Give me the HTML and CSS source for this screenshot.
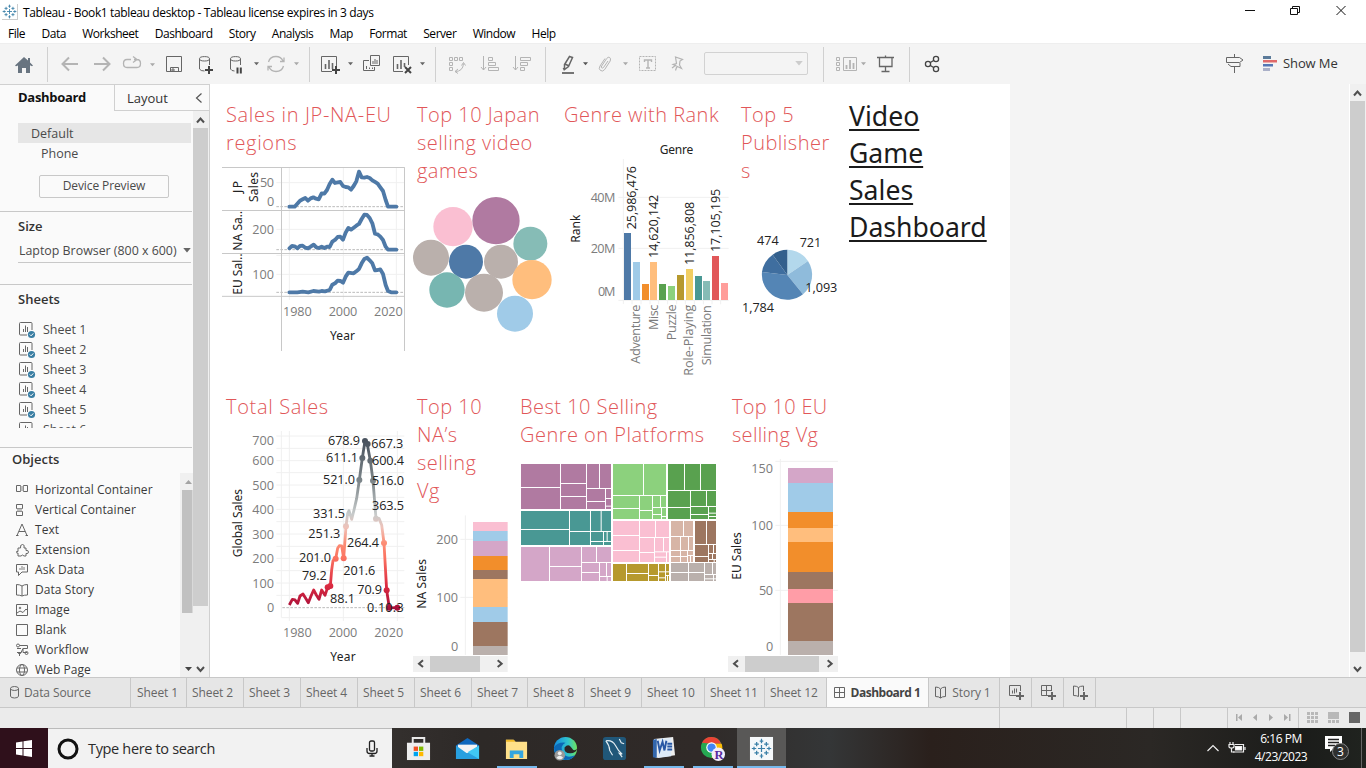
FILE: index.html
```html
<!DOCTYPE html>
<html lang="en">
<head>
<meta charset="utf-8">
<title>Tableau - Book1 tableau desktop</title>
<link rel="stylesheet" href="styles.css">
</head>
<body>
<svg class="defs" width="0" height="0">
  <symbol id="sheet" viewBox="0 0 17 17"><path d="M13 8V1.5Q13 .5 12 .5H1.5Q.5 .5.5 1.5V12q0 1 1 1H8M4.5 10V7M6.5 10V3.500M8.500 10V5" fill="none" stroke="#666"/><circle cx="12.500" cy="12.500" r="3.600" fill="#3a7ea3"/><path d="M10.800 12.500l1.300 1.300 2.200-2.400" fill="none" stroke="#fff"/></symbol>
  <symbol id="caret" viewBox="0 0 6 4"><path d="M0 0h6L3 3.500z"/></symbol>
  <symbol id="flake" viewBox="0 0 24 24"><path d="M12 8v8M8 12h8M12 1v5M10 3.500h4M12 18v5M10 20.500h4M1 12h5M3.500 10v4M18 12h5M20.500 10v4M6.500 4.500v5M4 7h5M17.500 4.500v5M15 7h5M6.500 14.500v5M4 17h5M17.500 14.500v5M15 17h5" stroke="#3b80a8" stroke-width="1.400" fill="none"/></symbol>
</svg>

<header class="titlebar">
  <svg class="app-icon" width="16" height="16"><use href="#flake"/></svg>
  <span class="title-text">Tableau - Book1 tableau desktop - Tableau license expires in 3 days</span>
  <svg class="win-buttons" width="136" height="22" viewBox="1230 0 136 22" fill="none" stroke="#111"><path d="M1245 10.500h10M1290.500 8.500h7v6h-7zM1292.500 8.500v-2h7v6h-2M1336.500 6l9 9M1345.500 6l-9 9"/></svg>
</header>
<nav class="menubar"><span>File</span><span>Data</span><span>Worksheet</span><span>Dashboard</span><span>Story</span><span>Analysis</span><span>Map</span><span>Format</span><span>Server</span><span>Window</span><span>Help</span></nav>

<div class="toolbar">
  <div class="tools"><svg width="47" height="41" viewBox="0 43 47 41"><path d="M15 65.500L24 57l4 3.600V58h2v4.500l3 3-1 .8-2-1V73h-4v-5h-4v5h-4v-7.500l-2 .8z" fill="#687480"/></svg></div>
  <div class="tools">
    <svg width="36" height="41" viewBox="48 43 36 41" class="off thick"><path d="M78 64H63M69 57.500L62.500 64l6.500 6.500"/></svg>
    <svg width="32" height="41" viewBox="84 43 32 41" class="off thick"><path d="M94 64h15M103 57.500l6.500 6.500-6.500 6.500"/></svg>
    <svg width="44" height="41" viewBox="116 43 44 41" class="off"><path d="M131 59.500h-4q-3.500 0-3.500 4t3.500 4h10q3.500 0 3.500-4t-3.500-4h-3M133 56.500l4 3-4 3" stroke-width="1.300"/><use href="#caret" x="150" y="63" width="5" height="4" fill="#aaa" stroke="none"/></svg>
    <svg width="30" height="41" viewBox="160 43 30 41" class="on"><path d="M166.500 56.500h15v15h-15zM170.500 71.500v-4h8v4"/><path d="M172 69h2v2h-2z"/></svg>
    <svg width="32" height="41" viewBox="190 43 32 41" class="on"><ellipse cx="204.500" cy="58.800" rx="5" ry="2.200"/><path d="M199.500 59v10q1 2 5 2M209.500 59v6"/><path d="M209 66v8M205 70h8" class="bold"/></svg>
    <svg width="42" height="41" viewBox="222 43 42 41" class="on"><ellipse cx="235.500" cy="58.800" rx="5" ry="2.200"/><path d="M230.500 59v10q1 2 4 2M240.500 59v6"/><path d="M237.500 67.500v6M240.800 67.500v6" class="bold"/><use href="#caret" x="254" y="62" width="5" height="4" fill="#666" stroke="none"/></svg>
    <svg width="45" height="41" viewBox="264 43 45 41" class="off"><path d="M268.500 62q1.500-5.500 7.500-5.500 5 0 7 4.500M283.500 66q-1.500 5.500-7.500 5.500-5 0-7-4.500M280 61.500h4v-4M272 66.500h-4v4" stroke-width="1.300"/><use href="#caret" x="294" y="62" width="5" height="4" fill="#aaa" stroke="none"/></svg>
  </div>
  <div class="tools">
    <svg width="48" height="41" viewBox="310 43 48 41" class="on"><path d="M336.500 66v-9.500h-15v15H332"/><path d="M325.500 69v-5M329 69v-9M332.500 69v-6" stroke-width="1.600"/><path d="M336 66v8M332 70h8" class="bold"/><use href="#caret" x="348" y="62" width="5" height="4" fill="#666" stroke="none"/></svg>
    <svg width="28" height="41" viewBox="358 43 28 41" class="on"><path d="M369 60.500h-5.500v10h11V67M370.500 55.500h9v10h-9zM366.500 69v-3M369.500 69v-1.500M372.500 69v-1.500M373 64v-3M375 64v-5M377 64v-4"/></svg>
    <svg width="49" height="41" viewBox="386 43 49 41" class="on"><path d="M408.500 65v-8.500h-15v15H403"/><path d="M397.500 69v-5M401 69v-9M404.500 67v-4" stroke-width="1.600"/><path d="M405 67l6 6M411 67l-6 6" class="bold"/><use href="#caret" x="420" y="62" width="5" height="4" fill="#666" stroke="none"/></svg>
  </div>
  <div class="tools">
    <svg width="37" height="41" viewBox="436 43 37 41" class="off"><path d="M449.500 57.500h3v3h-3zM454.500 57.500h3v3h-3zM459.500 57.500h3v3h-3zM449.500 62.500h3v3h-3zM449.500 67.500h3v3h-3zM455 71.500q8 0 8.500-8M461.500 65.500l2-3 2 3M458 69l-3 2.500 3 2" /></svg>
    <svg width="34" height="41" viewBox="473 43 34 41" class="off"><path d="M483.500 56v14M481 67l2.500 3 2.500-3M488.500 57.500h4v3h-4zM488.500 62.500h7v3h-7zM488.500 67.500h10v3h-10z"/></svg>
    <svg width="38" height="41" viewBox="507 43 38 41" class="off"><path d="M515.500 56v14M513 67l2.500 3 2.500-3M520.500 57.500h10v3h-10zM520.500 62.500h7v3h-7zM520.500 67.500h4v3h-4z"/></svg>
  </div>
  <div class="tools">
    <svg width="48" height="41" viewBox="546 43 48 41" class="on"><path d="M569.500 56.500l3 1-4 9-4 3v-5zM565 64l4 2M563 69l2-1" stroke-width="1.500"/><path d="M562 73h12" stroke-width="1.800"/><use href="#caret" x="583" y="62" width="5" height="4" fill="#555" stroke="none"/></svg>
    <svg width="40" height="41" viewBox="594 43 40 41" class="off"><path d="M608 61l-4.500 6.500q-1 1-1.800.3t0-1.800l5-7.500q1.500-2 3-1t.5 3.500l-5.500 8.500q-2 2.500-4.200 1t-.5-4.500l5-7.500"/><use href="#caret" x="623" y="62" width="5" height="4" fill="#aaa" stroke="none"/></svg>
    <svg width="30" height="41" viewBox="634 43 30 41" class="off"><rect x="639.500" y="56.500" width="16" height="14" stroke-dasharray="2 1"/><path d="M644.500 62v-2h7v2M648 60v8M646 68h4" stroke-width="1.400"/></svg>
    <svg width="40" height="41" viewBox="664 43 40 41" class="off"><path d="M675.500 57l7 2.500-2.500 1.500-.5 4 2 3.500-8.500-4 3.500-1zM677 66l-1.500 4.500M676 65l-4 3" stroke-width="1.200"/></svg>
    <span class="fit-select"><svg width="8" height="5"><use href="#caret" width="8" height="5" fill="#ccc"/></svg></span>
  </div>
  <div class="tools">
    <svg width="46" height="41" viewBox="824 43 46 41" class="off"><path d="M836.500 57.500h3v3h-3zM836.500 62.500h3v3h-3zM836.500 67.500h3v3h-3zM843.500 57.500h13v13h-13z"/><path d="M846.500 69v-4M850 69v-9M853.500 69v-6" stroke-width="1.800"/><use href="#caret" x="861" y="62" width="5" height="4" fill="#aaa" stroke="none"/></svg>
    <svg width="39" height="41" viewBox="870 43 39 41" class="on"><path d="M877 57.500h17M885.500 55.500v2M885.500 67v4M881.500 71.500h8M879.500 58v8.500h12.500V58" stroke-width="1.300"/></svg>
  </div>
  <div class="tools last">
    <svg width="40" height="41" viewBox="910 43 40 41" class="share"><circle cx="928" cy="64" r="2.600"/><circle cx="936" cy="59" r="2.600"/><circle cx="936" cy="69" r="2.600"/><path d="M930 62.700l4-2.500M930 65.300l4 2.500"/></svg>
  </div>
  <div class="showme">
    <svg width="28" height="41" viewBox="1222 43 28 41" class="on"><path d="M1226.500 57.500h13l3.500 2.500-3.500 2.500h-13zM1240 63v3.500h-9l-3-2.500M1234.500 54v3.500M1234.500 66.500v6.500"/></svg>
    <svg width="32" height="41" viewBox="1250 43 32 41"><path d="M1263 56h8v3h-8z" fill="#5b7a99"/><path d="M1263 60h14v2.500h-14z" fill="#e06a6a"/><path d="M1263 64h10v2.500h-10z" fill="#5577b5"/><path d="M1263 68h7v3h-7z" fill="#aab0c8"/></svg>
    <span>Show Me</span>
  </div>
</div>

<main class="workspace">
  <aside class="sidebar">
    <div class="side-tabs"><b>Dashboard</b><div class="layout-tab"><span>Layout</span><svg width="8" height="12" viewBox="0 0 8 12"><path d="M6.500 1.500L1.500 6l5 4.500" fill="none" stroke="#555" stroke-width="1.200"/></svg></div></div>
    <div class="side-body">
      <div class="side-content">
        <section class="devices">
          <div class="device selected">Default</div>
          <div class="device phone">Phone</div>
          <div class="preview-btn">Device Preview</div>
        </section>
        <section class="size">
          <h3>Size</h3>
          <div class="size-select"><span>Laptop Browser (800 x 600)</span><svg width="8" height="5"><use href="#caret" width="8" height="5" fill="#666"/></svg></div>
        </section>
        <section class="sheets">
          <h3>Sheets</h3>
          <div class="sheet-list">
            <div><svg width="17" height="17"><use href="#sheet"/></svg>Sheet 1</div>
            <div><svg width="17" height="17"><use href="#sheet"/></svg>Sheet 2</div>
            <div><svg width="17" height="17"><use href="#sheet"/></svg>Sheet 3</div>
            <div><svg width="17" height="17"><use href="#sheet"/></svg>Sheet 4</div>
            <div><svg width="17" height="17"><use href="#sheet"/></svg>Sheet 5</div>
            <div><svg width="17" height="17"><use href="#sheet"/></svg>Sheet 6</div>
          </div>
        </section>
        <section class="objects">
          <h3>Objects</h3>
          <div class="object-area">
            <div class="object-list">
              <div><svg viewBox="0 0 14 14"><path d="M.5 2.500h4v6h-4zM7.500 2.500h4v6h-4z"/><path d="M4.500 3h3v5h-3z" class="fill"/></svg>Horizontal Container</div>
              <div><svg viewBox="0 0 14 14"><path d="M.5 1.500h6v4h-6zM.5 8.500h6v4h-6z"/><path d="M1 5.500h5v3H1z" class="fill"/></svg>Vertical Container</div>
              <div><svg viewBox="0 0 14 14"><path d="M1 12.500L6 1l5 11.500M2.800 8.500h6.400M0 12.500h2.500M9.500 12.500H12"/></svg>Text</div>
              <div><svg viewBox="0 0 14 14"><path d="M2 5h2.500q-.5-3.500 2-3.500T8 5h2v2.500q2.500-.5 2.500 1.500T10 10.500V13H8q-1.500-2-3 0H2v-3q-1.500.5-2-.7 1-1.500 2-.8z"/></svg>Extension</div>
              <div><svg viewBox="0 0 14 14"><path d="M.5 1.500h11v7.500H6l-3.500 3.500V9h-2z"/><path d="M3 5h2v2H3zM5 3h2v4H5zM7 4h2v3H7z" class="fill"/></svg>Ask Data</div>
              <div><svg viewBox="0 0 14 14"><path d="M6 3Q4 1.500.5 1.500V12Q4 12 6 13q2-1 5.500-1V1.500Q8 1.500 6 3zM6 3v10"/></svg>Data Story</div>
              <div><svg viewBox="0 0 14 14"><path d="M.5 1.500h11v11H.500zM1 10l3-2 3 1.500L10 6l1.500 1.500"/><circle cx="4" cy="5" r=".8"/></svg>Image</div>
              <div><svg viewBox="0 0 14 14"><path d="M.5 1.500h11v11H.500z"/></svg>Blank</div>
              <div><svg viewBox="0 0 14 14"><path d="M3.500 2.500h8v3H7l-2 4H1M1 5.500h4M7 5.500v4h4"/><circle cx="2" cy="2.500" r="1.500"/><circle cx="10.500" cy="10" r="1.500"/><path d="M3.500 9v4M1.500 9l2 2.500 2-2.500"/></svg>Workflow</div>
              <div><svg viewBox="0 0 14 14"><circle cx="6" cy="7" r="5.500"/><ellipse cx="6" cy="7" rx="2.500" ry="5.500"/><path d="M1 5h10M1 9h10"/></svg>Web Page</div>
            </div>
            <svg class="inner-scroll" width="13" height="204" viewBox="180 473 13 204"><path d="M180 473h13v204h-13z" fill="#f0f0f0"/><path d="M182 490h10.500v123H182z" fill="#c1c1c1"/><path d="M185 484l3.500-4 3.500 4z" fill="#a3a3a3"/><path d="M185 667h7l-3.500 4z" fill="#444"/></svg>
          </div>
        </section>
      </div>
      <svg class="side-scroll" width="16" height="566" viewBox="193 111 16 566"><path d="M193 111h16v566h-16z" fill="#f0f0f0"/><path d="M193 128h15v478h-15z" fill="#cdcdcd"/><path d="M197 122.500l3.500-4 3.500 4M197 667l3.500 4 3.500-4" fill="none" stroke="#505050" stroke-width="2"/></svg>
    </div>
  </aside>

  <div class="canvas">
    <div class="row row-top">
      <article class="zone wide203">
        <h2 class="indent">Sales in JP-NA-EU<br>regions</h2>
        <svg width="203" height="200" viewBox="210 157 203 200"><g transform="translate(215 90) scale(.33333)">
          <path d="M223 234v396M385 234v396M544 234v396M184 278h384M184 418h384M184 553h384M184 496h384" class="grid"/>
          <path d="M184 350h384M184 479h384M184 607h384" class="zero"/>
          <path d="M21 232.500h548M21 361.500h548M21 490.500h548M21 619h548M199.500 232v551M568.500 232v551" class="frame"/>
          <g class="series"><polyline points="223,350 239,350 247,341 255,332 263,328 271,324 279,332 287,325 295,322 303,326 311,328 320,310 328,311 336,300 344,282 352,269 360,279 368,277 376,276 384,288 392,291 400,292 408,299 416,288 424,274 432,245 440,262 448,263 456,261 464,264 472,271 480,276 488,281 496,292 504,303 512,330 519,350 544,350"/>
          <polyline points="223,475 231,468 239,469 247,475 255,468 263,467 271,473 279,475 287,470 296,464 304,472 312,474 320,470 328,474 336,470 344,471 352,455 360,450 368,441 376,440 384,449 392,428 400,414 408,419 416,413 424,407 432,402 440,387 448,374 456,375 464,384 472,400 480,431 488,433 496,440 504,450 512,470 519,479 544,479"/>
          <polyline points="223,607 247,607 263,605 280,607 295,603 312,605 320,603 330,604 344,600 352,584 360,580 368,572 376,573 384,578 392,560 400,548 416,550 424,544 432,537 440,520 448,507 456,503 464,511 472,520 480,541 488,540 496,538 504,552 512,585 519,603 528,607 544,607"/></g>
          <g class="tick"><text x="135" y="291" textLength="42">50</text><text x="156" y="348">0</text><text x="112" y="432" textLength="65">200</text><text x="112" y="567" textLength="65">100</text><text x="204" y="678" textLength="86">1980</text><text x="341" y="678" textLength="86">2000</text><text x="477" y="678" textLength="86">2020</text></g>
          <text x="345" y="750" class="axis" textLength="75">Year</text>
          <g class="vaxis"><text transform="translate(80 309) rotate(-90)" textLength="36">JP</text><text transform="translate(130 336) rotate(-90)" textLength="90">Sales</text><text transform="translate(80 482) rotate(-90)" textLength="120">NA Sa..</text><text transform="translate(80 614) rotate(-90)" textLength="124">EU Sal..</text></g>
        </g></svg>
      </article>
      <article class="zone wide147">
        <h2>Top 10 Japan<br>selling video<br>games</h2>
        <svg width="147" height="150" viewBox="413 185 147 150"><g transform="translate(405 90) scale(.33333)">
          <circle cx="144" cy="410" r="59" fill="#fabfd2"/><circle cx="273" cy="392" r="71" fill="#b07aa1"/><circle cx="376" cy="461" r="51" fill="#86bcb6"/><circle cx="78" cy="503" r="54" fill="#bab0ac"/><circle cx="183" cy="515" r="51" fill="#4e79a7"/><circle cx="288" cy="515" r="51" fill="#bab0ac"/><circle cx="381" cy="569" r="59" fill="#ffbe7d"/><circle cx="126" cy="600" r="53" fill="#77b6b1"/><circle cx="237" cy="608" r="57" fill="#bab0ac"/><circle cx="330" cy="671" r="54" fill="#a0cbe8"/>
        </g></svg>
      </article>
      <article class="zone wide177">
        <h2>Genre with Rank</h2>
        <svg width="177" height="255" viewBox="560 129 177 255"><g transform="translate(405 90) scale(.33333)">
          <path d="M655 207v435M640 322h331M640 475h331M640 631h331M681 631v12M708 631v12M735 631v12M761 631v12M788 631v12M815 631v12M841 631v12M868 631v12M895 631v12M921 631v12M947 631v12" class="grid"/>
          <path d="M657 429h21v201h-21z" fill="#4e79a7"/><path d="M684 516h21v114h-21z" fill="#a0cbe8"/><path d="M711 582h21v48h-21z" fill="#f28e2b"/><path d="M735 516h21v114h-21z" fill="#ffbe7d"/><path d="M762 582h21v48h-21z" fill="#59a14f"/><path d="M789 588h21v42h-21z" fill="#8cd17d"/><path d="M816 555h21v75h-21z" fill="#b6992d"/><path d="M843 537h21v93h-21z" fill="#f1ce63"/><path d="M870 558h21v72h-21z" fill="#499894"/><path d="M894 573h21v57h-21z" fill="#86bcb6"/><path d="M921 498h21v132h-21z" fill="#e15759"/><path d="M948 579h21v51h-21z" fill="#ff9d9a"/>
          <g class="mark"><text transform="translate(694 418) rotate(-90)" textLength="190">25,986,476</text><text transform="translate(759 504) rotate(-90)" textLength="190">14,620,142</text><text transform="translate(867 525) rotate(-90)" textLength="190">11,856,808</text><text transform="translate(945 486) rotate(-90)" textLength="190">17,105,195</text></g>
          <g class="tick"><text x="557" y="336" textLength="74">40M</text><text x="557" y="488" textLength="74">20M</text><text x="579" y="619" textLength="52">0M</text>
          <text transform="translate(705 821) rotate(-90)" textLength="177">Adventure</text><text transform="translate(759 720) rotate(-90)" textLength="76">Misc</text><text transform="translate(813 751) rotate(-90)" textLength="108">Puzzle</text><text transform="translate(864 857) rotate(-90)" textLength="213">Role-Playing</text><text transform="translate(918 826) rotate(-90)" textLength="180">Simulation</text></g>
          <text x="764" y="193" class="axis" textLength="101">Genre</text><text transform="translate(525 458) rotate(-90)" class="axis" textLength="84">Rank</text>
        </g></svg>
      </article>
      <article class="zone wide107">
        <h2>Top 5<br>Publisher<br>s</h2>
        <svg width="107" height="150" viewBox="737 185 107 150"><g transform="translate(730 90) scale(.33333)">
          <path d="M172 555V479A76 76 0 0 1 234 513z" fill="#b3d8ec"/><path d="M172 555L234 513A76 76 0 0 1 219 613z" fill="#8fbbdb"/><path d="M172 555L219 613A76 76 0 0 1 96 546z" fill="#5485b5"/><path d="M172 555L96 546A76 76 0 0 1 128 494z" fill="#3f6e9f"/><path d="M172 555L128 494A76 76 0 0 1 172 479z" fill="#33608d"/>
          <g class="mark"><text x="81" y="465" textLength="65">474</text><text x="209" y="471" textLength="65">721</text><text x="226" y="606" textLength="96">1,093</text><text x="36" y="666" textLength="96">1,784</text></g>
        </g></svg>
      </article>
      <article class="heading">Video<br>Game<br>Sales<br>Dashboard</article>
    </div>
    <div class="row">
      <article class="zone wide203">
        <h2 class="indent">Total Sales</h2>
        <svg width="203" height="254" viewBox="210 421 203 254"><defs><linearGradient id="heat" gradientUnits="userSpaceOnUse" x1="0" y1="150" x2="0" y2="655"><stop offset="0" stop-color="#49525e"/><stop offset=".25" stop-color="#7e878b"/><stop offset=".44" stop-color="#c7cbcb"/><stop offset=".52" stop-color="#efc2b9"/><stop offset=".61" stop-color="#fc8e76"/><stop offset=".7" stop-color="#fb7361"/><stop offset=".86" stop-color="#dc2b41"/><stop offset="1" stop-color="#a80f3a"/></linearGradient></defs>
        <g transform="translate(215 390) scale(.33333)">
          <path d="M199 123v560M223 123v570M385 123v570M547 123v570M184 138h384M184 175h384M184 212h384M184 248h384M184 285h384M184 322h384M184 358h384M184 395h384M184 432h384M184 469h384M184 505h384M184 542h384M184 579h384M184 616h384M199 683h369" class="grid"/><path d="M202 653h366" class="zero"/>
          <polyline fill="none" stroke="url(#heat)" stroke-width="8.500" stroke-linejoin="round" points="223,645 232,628 240,630 248,640 255,618 264,612 272,625 280,638 288,618 296,600 304,615 312,628 320,600 330,616 338,592 346,588 350,540 354,512 362,506 368,475 373,467 380,468 386,505 393,409 398,370 402,362 410,388 417,360 425,325 433,270 442,204 450,153 456,158 466,212 474,272 483,386 492,385 500,405 507,459 515,601 523,653.500 547,653"/>
          <g fill="url(#heat)"><circle cx="338" cy="592" r="9"/><circle cx="346" cy="588" r="9"/><circle cx="362" cy="506" r="9"/><circle cx="386" cy="505" r="9"/><circle cx="393" cy="409" r="9"/><circle cx="433" cy="270" r="9"/><circle cx="442" cy="204" r="9"/><circle cx="450" cy="153" r="9"/><circle cx="458" cy="162" r="9"/><circle cx="466" cy="212" r="9"/><circle cx="474" cy="272" r="9"/><circle cx="483" cy="386" r="9"/><circle cx="507" cy="459" r="9"/><circle cx="515" cy="601" r="9"/><circle cx="523" cy="653" r="9"/><circle cx="547" cy="653" r="9"/></g>
          <g class="tick"><text x="112" y="165" textLength="65">700</text><text x="112" y="225" textLength="65">600</text><text x="112" y="299" textLength="65">500</text><text x="112" y="372" textLength="65">400</text><text x="112" y="446" textLength="65">300</text><text x="112" y="519" textLength="65">200</text><text x="112" y="593" textLength="65">100</text><text x="156" y="666">0</text><text x="204" y="741" textLength="86">1980</text><text x="341" y="741" textLength="86">2000</text><text x="478" y="741" textLength="87">2020</text></g>
          <g class="mark"><text x="339" y="165" textLength="96">678.9</text><text x="333" y="216" textLength="96">611.1</text><text x="324" y="283" textLength="96">521.0</text><text x="294" y="384" textLength="96">331.5</text><text x="280" y="444" textLength="96">251.3</text><text x="252" y="516" textLength="96">201.0</text><text x="261" y="570" textLength="74">79.2</text><text x="345" y="639" textLength="75">88.1</text><text x="385" y="556" textLength="96">201.6</text><text x="396" y="471" textLength="96">264.4</text><text x="427" y="612" textLength="74">70.9</text><text x="456" y="666" textLength="55">0.1</text><text x="511" y="666" textLength="55">0.3</text><text x="469" y="174" textLength="96">667.3</text><text x="471" y="225" textLength="96">600.4</text><text x="471" y="285" textLength="96">516.0</text><text x="471" y="360" textLength="96">363.5</text></g>
          <text x="346" y="813" class="axis" textLength="76">Year</text><text transform="translate(80 502) rotate(-90)" class="axis" textLength="205">Global Sales</text>
        </g></svg>
      </article>
      <article class="zone wide103">
        <h2>Top 10<br>NA’s<br>selling<br>Vg</h2>
        <svg width="103" height="168" viewBox="413 505 103 168"><g transform="translate(215 390) scale(.33333)">
          <path d="M751 376v419M736 448h142M736 622h142" class="grid"/>
          <path d="M774 396h104v27H774z" fill="#fabfd2"/><path d="M774 423h104v30H774z" fill="#a0cbe8"/><path d="M774 453h104v45H774z" fill="#d4a6c8"/><path d="M774 498h104v42H774z" fill="#f28e2b"/><path d="M774 540h104v27H774z" fill="#9d7660"/><path d="M774 567h104v84H774z" fill="#ffbe7d"/><path d="M774 651h104v45H774z" fill="#a0cbe8"/><path d="M774 696h104v72H774z" fill="#9d7660"/><path d="M774 768h104v27H774z" fill="#bab0ac"/>
          <g class="tick"><text x="664" y="462" textLength="65">200</text><text x="664" y="636" textLength="65">100</text><text x="708" y="783">0</text></g><text transform="translate(633 656) rotate(-90)" class="axis" textLength="149">NA Sales</text>
          <path d="M594 798h284v48H594z" fill="#f0f0f0"/><path d="M645 798h150v48H645z" fill="#cdcdcd"/><path d="M624 811l-12 10 12 10M848 811l12 10-12 10" class="arrow"/>
        </g></svg>
      </article>
      <article class="zone wide212">
        <h2>Best 10 Selling<br>Genre on Platforms</h2>
        <svg width="212" height="140" viewBox="516 449 212 140"><g transform="translate(510 390) scale(.33333)">
          <path d="M33 222h270v135H33z" fill="#b07aa1"/><path d="M33 363h270v102H33z" fill="#499894"/><path d="M33 471h270v102H33z" fill="#d4a6c8"/><path d="M309 222h159v165H309z" fill="#8cd17d"/><path d="M474 222h144v165H474z" fill="#59a14f"/><path d="M309 393h168v123H309z" fill="#fabfd2"/><path d="M309 522h168v51H309z" fill="#b6992d"/><path d="M483 393h66v123h-66z" fill="#d7b5a6"/><path d="M555 393h63v123h-63z" fill="#9d7660"/><path d="M483 519h135v54H483z" fill="#bab0ac"/>
          <g stroke="#fff" stroke-width="3" fill="none">
          <path d="M151.500 222v135M33 292.500h118M229.500 222v135M152 280.500h77M152 319.500h77M268.500 222v73M231 295.500h72M286.500 296v61M231 334.500h55M287 325.500h16M287 348.500h16"/>
          <path d="M178.500 363v102M33 418.500h145M241.500 363v102M179 424.500h124M273.500 363v61M280.500 424v41M242 454.500h61M291.500 425v29"/>
          <path d="M118.500 471v102M214.500 471v102M119 529.500h95M215 517.500h88M259.500 471v46M215 547.500h53M268.500 518v55M289.500 518v41M268 559.500h35M291.500 559v14"/>
          <path d="M400.500 222v94M309 316.500h159M388.500 317v70M309 355.500h79M427.500 317v70M389 361.500h38M451.500 317v35M428 352.500h40M454.500 353v34M428 373.500h26M455 379.500h13"/>
          <path d="M523.500 222v79M571.500 222v79M474 301.500h144M541.500 302v85M474 352.500h67M542 349.500h76M589.500 302v47M542 373.500h53M595.500 350v37M596 369.500h22M596 379.500h22"/>
          <path d="M388.500 393v123M309 436.500h79M309 481.500h79M389 442.500h88M436.500 393v49M433.500 443v73M389 487.500h44M434 485.500h43M460.500 443v42M469.500 486v30M434 501.500h35"/>
          <path d="M349.500 522v51M415.500 522v51M350 550.500h65M416 556.500h29M445.500 522v51M446 545.500h31M446 563.500h20M466.500 522v51M472.500 556v17M466 556.500h11"/>
          <path d="M520.500 393v46M483 439.500h66M511.500 440v76M535.500 440v41M483 481.500h66M532.500 482v34M483 499.500h49M533 496.500h16M541.500 497v19"/>
          <path d="M589.500 393v70M555 463.500h63M595.500 463v53M555 499.500h40M596 490.500h22M610.500 464v26M607.500 491v17M596 508.500h22M612.500 509v7"/>
          <path d="M535.500 519v54M483 547.500h100M583.500 519v54M607.500 519v34M583 553.500h35M610.500 554v19M584 566.500h34"/></g>
        </g></svg>
      </article>
      <article class="zone">
        <h2 class="narrow">Top 10 EU<br>selling Vg</h2>
        <svg width="116" height="224" viewBox="728 449 116 224"><g transform="translate(510 390) scale(.33333)">
          <path d="M811 207v588M796 214h188M796 406h188M796 601h188" class="grid"/>
          <path d="M834 234h135v45H834z" fill="#d4a6c8"/><path d="M834 279h135v87H834z" fill="#a0cbe8"/><path d="M834 366h135v48H834z" fill="#f28e2b"/><path d="M834 414h135v42H834z" fill="#ffbe7d"/><path d="M834 456h135v90H834z" fill="#f28e2b"/><path d="M834 546h135v51H834z" fill="#9d7660"/><path d="M834 597h135v42H834z" fill="#ff9da7"/><path d="M834 639h135v114H834z" fill="#9d7660"/><path d="M834 753h135v42H834z" fill="#bab0ac"/>
          <g class="tick"><text x="724" y="249" textLength="65">150</text><text x="724" y="420" textLength="65">100</text><text x="747" y="614" textLength="42">50</text><text x="768" y="783">0</text></g><text transform="translate(693 569) rotate(-90)" class="axis" textLength="142">EU Sales</text>
          <path d="M654 798h330v48H654z" fill="#f0f0f0"/><path d="M705 798h222v48H705z" fill="#cdcdcd"/><path d="M684 811l-12 10 12 10M953 811l12 10-12 10" class="arrow"/>
        </g></svg>
      </article>
    </div>
  </div>
  <svg class="page-scroll" width="17" height="593" viewBox="1349 84 17 593"><path d="M1349 84h17v593h-17z" fill="#f0f0f0"/><path d="M1350 101h15v551h-15z" fill="#cdcdcd"/><path d="M1349.500 84v593" stroke="#fff"/><path d="M1354 95.500l3.500-4 3.500 4M1354 667l3.500 4 3.500-4" fill="none" stroke="#505050" stroke-width="2"/></svg>
</main>

<nav class="sheet-tabs">
  <div class="tab w131"><svg width="10" height="13" viewBox="0 0 10 13"><ellipse cx="4.500" cy="2.500" rx="4" ry="2"/><path d="M.5 2.500V10q0 2 4 2t4-2V2.500"/></svg>Data Source</div>
  <div class="tab w56 left first">Sheet 1</div><div class="tab w57 left">Sheet 2</div><div class="tab w57 left">Sheet 3</div><div class="tab w57 left">Sheet 4</div><div class="tab w57 left">Sheet 5</div><div class="tab w57 left">Sheet 6</div><div class="tab w56 left">Sheet 7</div><div class="tab w57 left">Sheet 8</div><div class="tab w57 left">Sheet 9</div><div class="tab w63 left">Sheet 10</div><div class="tab w60 left">Sheet 11</div><div class="tab w62 left">Sheet 12</div>
  <div class="tab w102 active"><svg width="12" height="12" viewBox="0 0 12 12"><path d="M.5.5h10v10H.500zM5.500.5v10M.5 5.500h10"/></svg>Dashboard 1</div>
  <div class="tab w71"><svg width="12" height="13" viewBox="0 0 12 13"><path d="M5.500 3Q4 1 .5 1v9.500q3.500 0 5 1.500 1.500-1.500 5-1.500V1Q7 1 5.500 3zM5.500 3v9"/></svg>Story 1</div>
  <div class="tab w32"><svg width="16" height="16" viewBox="0 0 16 16"><path d="M11.500 6V.500H.500v10H7M3.500 8.500v-3M5.500 8.500v-5M7.500 7.500v-4"/><path d="M11 7v8M7 11h8" class="bold"/></svg></div>
  <div class="tab w32"><svg width="16" height="16" viewBox="0 0 16 16"><path d="M10.500 6V.500H.500v10H7M5.500.5v10M.500 5.500h10"/><path d="M11 7v8M7 11h8" class="bold"/></svg></div>
  <div class="tab w32"><svg width="16" height="16" viewBox="0 0 16 16"><path d="M10.500 6V1Q7 1 5.500 2.500 4 1 .5 1v9.500q3.500 0 5 1V2.500"/><path d="M11 7v8M7 11h8" class="bold"/></svg></div>
</nav>
<div class="statusbar">
  <i class="s1000"></i><i class="s127"></i><i class="s27"></i><i class="s27"></i><i class="s47"></i>
  <i class="s71"><svg width="70" height="20" viewBox="1228 708 70 20" fill="#aaa"><path d="M1236 714h1.500v7H1236zM1242 714v7l-4-3.500zM1257 714v7l-4-3.500zM1269 714v7l4-3.500zM1284 714v7l4-3.500zM1289 714h1.500v7H1289z"/></svg></i>
  <svg width="67" height="20" viewBox="1299 708 67 20"><path d="M1307 712h3v3h-3zM1311 712h3v3h-3zM1315 712h3v3h-3zM1307 716h3v3h-3zM1311 716h3v3h-3zM1315 716h3v3h-3zM1307 720h3v3h-3zM1311 720h3v3h-3zM1315 720h3v3h-3zM1328 712h11v7h-11zM1328 720h3v3h-3zM1332 720h3v3h-3zM1336 720h3v3h-3z" fill="#b8b8b8"/><path d="M1349 712h11v11h-11z" fill="#666"/></svg>
</div>

<footer class="taskbar">
  <div class="start"><svg width="16" height="17" viewBox="0 0 16 17" fill="#fff"><path d="M0 2.500l6.500-1v6.500H0zM7.500 1.300L16 0v8H7.500zM0 9h6.500v6.500l-6.500-1zM7.500 9H16v8l-8.500-1.300z"/></svg></div>
  <div class="search"><svg width="22" height="22"><circle cx="11" cy="11" r="9" fill="none" stroke="#111" stroke-width="3"/></svg><span>Type here to search</span><svg width="12" height="17" viewBox="0 0 12 17" fill="none" stroke="#222" stroke-width="1.300"><rect x="3.500" y="1" width="5" height="10" rx="1.500"/><path d="M1 8v3q0 2.500 2.500 2.500h5Q11 13.500 11 11V8M6 13.500V16M3.500 16h5"/></svg></div>
  <div class="app"><svg viewBox="0 0 26 26"><path d="M7 8V2h12v6" fill="none" stroke="#e8e8e8" stroke-width="2"/><path d="M1 7h24v18H1z" fill="#eee"/><path d="M8 11h4.500v4.500H8z" fill="#f25022"/><path d="M13.500 11H18v4.500h-4.500z" fill="#7fba00"/><path d="M8 16.500h4.500V21H8z" fill="#00a4ef"/><path d="M13.500 16.500H18V21h-4.500z" fill="#ffb900"/></svg></div>
  <div class="app"><svg viewBox="0 0 26 26"><path d="M1 10L13 2l12 8v14H1z" fill="#0f68bd"/><path d="M3 9h20v9H3z" fill="#f4f4f4"/><path d="M1 10l12 8.500L25 10v14H1z" fill="#28a0e0"/><path d="M25 10v14L13 17z" fill="#40c8f4"/></svg></div>
  <div class="app open"><svg viewBox="0 0 26 26"><path d="M2 4h8l2 2h12v18H2z" fill="#ffe08a"/><path d="M2 4h8l2 2H2z" fill="#f0b928"/><path d="M6 23v-8h14v8h-4v-4h-6v4z" fill="#35a6df"/></svg></div>
  <div class="app"><svg viewBox="0 0 26 26"><defs><linearGradient id="edge"><stop stop-color="#168cdf"/><stop offset=".6" stop-color="#2fc3cf"/><stop offset="1" stop-color="#6fe45c"/></linearGradient></defs><circle cx="13" cy="13" r="12" fill="url(#edge)"/><path d="M1 12q4-6 12-5-6 3-3 10t13 3q-3 5-10 5Q2 24 1 12z" fill="#0c68b5"/><path d="M12 12q4-5 7 0t6 1q-1 5-7 5-7 0-6-6z" fill="#2b2625"/><circle cx="7" cy="20" r="5.500" fill="#999"/><circle cx="7" cy="18" r="2" fill="#eee"/><path d="M3.500 22.500q3.500-4 7 0Q7 26 3.500 22.500z" fill="#eee"/></svg></div>
  <div class="app"><svg viewBox="0 0 26 26"><rect x="1" y="1" width="24" height="24" rx="3" fill="#205779"/><path d="M4 5q7-1 10 5t7 9l-3-1 3 4M4 5q4 5 4 10l3 5M18 3l2 4 3 1" fill="none" stroke="#e3edf2" stroke-width="1.200"/></svg></div>
  <div class="app open"><svg viewBox="0 0 26 26"><path d="M3 3l20-2 2 19-20 3z" fill="#eee"/><path d="M2 4l4-1v20l-4-1z" fill="#3266ac"/><path d="M7 3l14-1v19L7 23z" fill="#ddeaf7"/><path d="M7 5l2 10 3-9 2 9 2-10M17 8h5M17 11h5M17 14h5" fill="none" stroke="#2858a5" stroke-width="2"/></svg></div>
  <div class="app open"><svg viewBox="0 0 26 26"><circle cx="12" cy="12" r="11" fill="#26a852"/><path d="M2 7a11 11 0 0 1 20 1H12z" fill="#ea4335"/><path d="M22.500 8A11 11 0 0 1 12 23l5-10-2-5z" fill="#fbbc05"/><circle cx="12" cy="12" r="5.500" fill="#fff"/><circle cx="12" cy="12" r="4.300" fill="#4285f4"/><circle cx="19" cy="19" r="7" fill="#f3eefa"/><text x="15" y="24" class="badge">R</text></svg></div>
  <div class="app open current"><svg viewBox="0 0 26 26"><path d="M1 1h24v24H1z" fill="#f5f8fa"/><use href="#flake" x="2" y="2" width="22" height="22"/></svg></div>
  <div class="tray">
    <svg width="44" height="20" viewBox="0 0 44 20" fill="none" stroke="#eee" stroke-width="1.200"><path d="M1.500 13l5.500-5.500 5.500 5.500M29 6.500h8.500v7.500H27M39 9v3"/><path d="M29.500 8.500h6v3.500h-6z" fill="#fff"/><path d="M24 4v2.500M27 4v2.500M23 6.500h5v2q0 1.500-2.500 1.500T23 8.500zM25.500 10v4h3"/></svg>
    <div class="clock">6:16 PM<br>4/23/2023</div>
    <svg width="28" height="28" viewBox="0 0 28 28"><path d="M2 2h17v13H10l-3 3v-3H2z" fill="#fff"/><path d="M5 5.500h11M5 8.500h11M5 11.500h7" stroke="#222" stroke-width="1.300"/><circle cx="17.500" cy="17.500" r="8" fill="#2f302f" stroke="#888"/><text x="14" y="22" class="count">3</text></svg>
    <i class="peek"></i>
  </div>
</footer>
</body>
</html>
```
FILE: styles.css
```css
* { box-sizing: border-box; }
body { margin: 0; width: 1366px; height: 768px; overflow: hidden; background: #fff; font-family: "Open Sans", "Noto Sans", sans-serif; color: #333; display: flex; flex-direction: column; }
svg { display: block; flex: none; }
.defs { position: absolute; }
.titlebar { height: 24px; display: flex; align-items: center; padding-left: 2px; font-size: 12px; color: #000; }
.app-icon { border-right: 1px solid #ccc; border-bottom: 1px solid #ccc; margin-top: -1px; }
.title-text { margin-left: 5px; letter-spacing: -.37px; }
.win-buttons { margin-left: auto; align-self: flex-start; }
.menubar { height: 19px; display: flex; padding-left: 8px; gap: 16.300px; font-size: 12px; line-height: 19px; letter-spacing: -.46px; color: #000; }
.toolbar { height: 41px; display: flex; background: #f4f4f4; border-top: 1px solid #eee; }
.toolbar svg { margin-top: -1px; }
.tools { display: flex; border-right: 1px solid #d0d0d0; height: 35px; margin-top: 3px; }
.tools > svg { margin-top: -4px; }
.tools.last { border: 0; }
.off, .on, .share { fill: none; stroke: #b4b4b4; }
.on { stroke: #666; }
.share { stroke: #444; stroke-width: 1.3; }
.thick { stroke-width: 2; }
.bold { stroke: #444; stroke-width: 2; }
.fit-select { width: 104px; height: 23px; margin: 5px 15px 0 0; border: 1px solid #d2d2d2; border-radius: 2px; display: flex; align-items: center; justify-content: flex-end; padding-right: 4px; }
.showme { display: flex; margin-left: auto; padding-right: 28px; font-size: 13px; line-height: 39px; }
.showme span { width: 55px; margin-left: 1px; white-space: nowrap; letter-spacing: -.1px; }

.workspace { height: 593px; display: flex; background: #f4f4f4; }
.sidebar { width: 210px; border-top: 1px solid #d0d0d0; border-right: 1px solid #d0d0d0; background: #fafafa; display: flex; flex-direction: column; }
.side-tabs { height: 26px; display: flex; font-size: 13px; line-height: 24px; color: #111; }
.side-tabs b { width: 114px; padding-left: 18px; letter-spacing: -.3px; }
.layout-tab { flex: 1; border-left: 1px solid #d0d0d0; border-bottom: 1px solid #d0d0d0; padding: 0 6px 0 12px; display: flex; justify-content: space-between; align-items: center; color: #333; }
.side-body { height: 566px; display: flex; }
.side-content { width: 193px; font-size: 12.5px; color: #4a4a4a; }
.side-content section { border-bottom: 1px solid #c8c8c8; width: 192px; }
.side-content h3 { margin: 0; font-size: 13px; line-height: 18px; font-weight: 600; color: #333; }
.devices { height: 101px; padding: 12px 0 0 18px; }
.device { width: 173px; height: 20px; line-height: 21px; padding-left: 13px; }
.device.phone { padding-left: 23px; line-height: 22px; }
.device.selected { background: #e6e6e6; }
.preview-btn { margin: 12px 0 0 21px; width: 130px; height: 23px; border: 1px solid #c8c8c8; border-radius: 2px; text-align: center; line-height: 20px; font-size: 12px; letter-spacing: -.1px; }
.size { height: 73px; padding: 5px 0 0 18px; }
.size-select { width: 173px; height: 28px; border-bottom: 1px solid #c8c8c8; display: flex; align-items: center; justify-content: space-between; padding: 4px 0 0 1px; white-space: nowrap; font-size: 12.4px; }
.size-select svg { margin-right: 0; }
.sheets { height: 163px; padding: 5px 0 0 18px; }
.sheet-list { margin-top: 11px; height: 109px; overflow: hidden; }
.sheet-list div { height: 20px; display: flex; align-items: center; gap: 7px; padding: 2px 0 0 1px; line-height: 18px; }
.side-content section.objects { height: 229px; padding: 2px 0 0 12px; border: 0; width: 193px; }
.object-area { margin-top: 5px; height: 204px; display: flex; justify-content: space-between; }
.object-list { padding: 7px 0 0 4px; height: 204px; overflow: hidden; font-size: 12px; letter-spacing: .06px; color: #3a3a3a; white-space: nowrap; }
.object-list div { height: 20px; line-height: 20px; display: flex; align-items: center; gap: 5px; }
.object-list svg { width: 14px; height: 14px; fill: none; stroke: #666; }
.object-list .fill { fill: #bbb; stroke: none; }

.canvas { width: 800px; background: #fff; }
.page-scroll { margin-left: auto; }
.row { display: flex; height: 284px; }
.row-top { height: 309px; padding-top: 17px; }
.wide203 { width: 203px; } .wide147 { width: 147px; } .wide177 { width: 177px; } .wide107 { width: 107px; } .wide103 { width: 103px; } .wide212 { width: 212px; }
.zone h2 { margin: 0; padding-left: 4px; font-size: 20px; line-height: 28px; font-weight: 300; letter-spacing: .48px; color: #e15759; white-space: nowrap; }
.zone h2.indent { padding-left: 16px; letter-spacing: .66px; }
.zone h2.narrow { letter-spacing: .3px; }
.heading { padding: 0 0 0 5px; margin-top: -3px; font-family: "Noto Sans", sans-serif; font-size: 26.600px; line-height: 37px; color: #1b1b1b; text-decoration: underline; text-decoration-thickness: 1.500px; text-underline-offset: 3px; }
.grid { stroke: #f0f0f0; stroke-width: 3; fill: none; }
.zero { stroke: #bbb; stroke-width: 3; stroke-dasharray: 8 4; }
.frame { stroke: #c8c8c8; stroke-width: 3; fill: none; }
.series { fill: none; stroke: #4e79a7; stroke-width: 11.500; stroke-linejoin: round; stroke-linecap: round; }
.tick, .mark { font-size: 38px; font-weight: 400; fill: #7c7c7c; }
.mark { fill: #222; }
.axis, .vaxis { font-size: 36px; fill: #222; font-family: "Noto Sans", sans-serif; font-weight: 400; }
.arrow { stroke: #505050; stroke-width: 6; fill: none; }

.sheet-tabs { height: 31px; display: flex; background: #e6e6e6; border-top: 1px solid #c8c8c8; border-bottom: 1px solid #c8c8c8; font-size: 12px; color: #666; }
.tab { border-right: 1px solid #c8c8c8; display: flex; align-items: center; justify-content: center; gap: 5px; white-space: nowrap; letter-spacing: -.1px; }
.tab svg { fill: none; stroke: #666; }
.tab .bold { stroke: #666; }
.tab.left { justify-content: flex-start; padding-left: 5px; }
.tab.left.first { padding-left: 6px; }
.w131 { width: 131px; }
.tab.w131 { justify-content: flex-start; padding-left: 10px; gap: 4px; }
.w56 { width: 56px; } .w57 { width: 57px; } .w60 { width: 60px; } .w62 { width: 62px; } .w63 { width: 63px; } .w71 { width: 71px; } .w102 { width: 102px; } .w32 { width: 32px; }
.w71 { padding-right: 2px; }
.w32 { padding-left: 2px; }
.tab.active { background: #fafafa; font-weight: 700; color: #444; letter-spacing: -.5px; padding-right: 1px; }
.statusbar { height: 20px; display: flex; background: #ebebeb; }
.statusbar i { border-right: 1px solid #c8c8c8; }
.s1000 { width: 1000px; } .s127 { width: 127px; } .s27 { width: 27px; } .s47 { width: 47px; } .s71 { width: 71px; }

.taskbar { height: 40px; display: flex; background: linear-gradient(90deg, #2c2624 0, #363230 360px, #2d2927 480px, #302a28 700px, #343637 830px, #2a201c 930px, #2b2825 1150px, #1b1c1a 1300px, #20231f); }
.start { width: 48px; background: #2f101b; display: flex; align-items: center; justify-content: center; }
.search { width: 344px; background: #f2f2f2; border-top: 1px solid #bbb; display: flex; align-items: center; padding: 0 14px 0 9px; color: #2b2b2b; font-size: 14.500px; letter-spacing: -.34px; }
.search span { margin-left: 9px; flex: 1; }
.app { width: 49px; height: 40px; display: flex; align-items: center; justify-content: center; }
.search + .app { margin-left: 2px; }
.app svg { width: 25px; height: 25px; }
.app.open { background: linear-gradient(#76b9ed, #76b9ed) center bottom / 40px 2px no-repeat; }
.app.current { background: linear-gradient(#76b9ed, #76b9ed) center bottom / 49px 2px no-repeat #595857; }
.badge { font: bold 13px "Liberation Serif", serif; fill: #5b2a9e; }
.count { font: 12px "Open Sans", sans-serif; fill: #fff; }
.tray { margin-left: auto; width: 160px; display: flex; align-items: center; color: #fff; font-size: 12px; line-height: 18px; }
.clock { width: 72px; text-align: center; margin: 0 6px 0 -5px; letter-spacing: -.48px; }
.peek { width: 1px; height: 40px; margin-left: auto; margin-right: 4px; background: #666; }
```
